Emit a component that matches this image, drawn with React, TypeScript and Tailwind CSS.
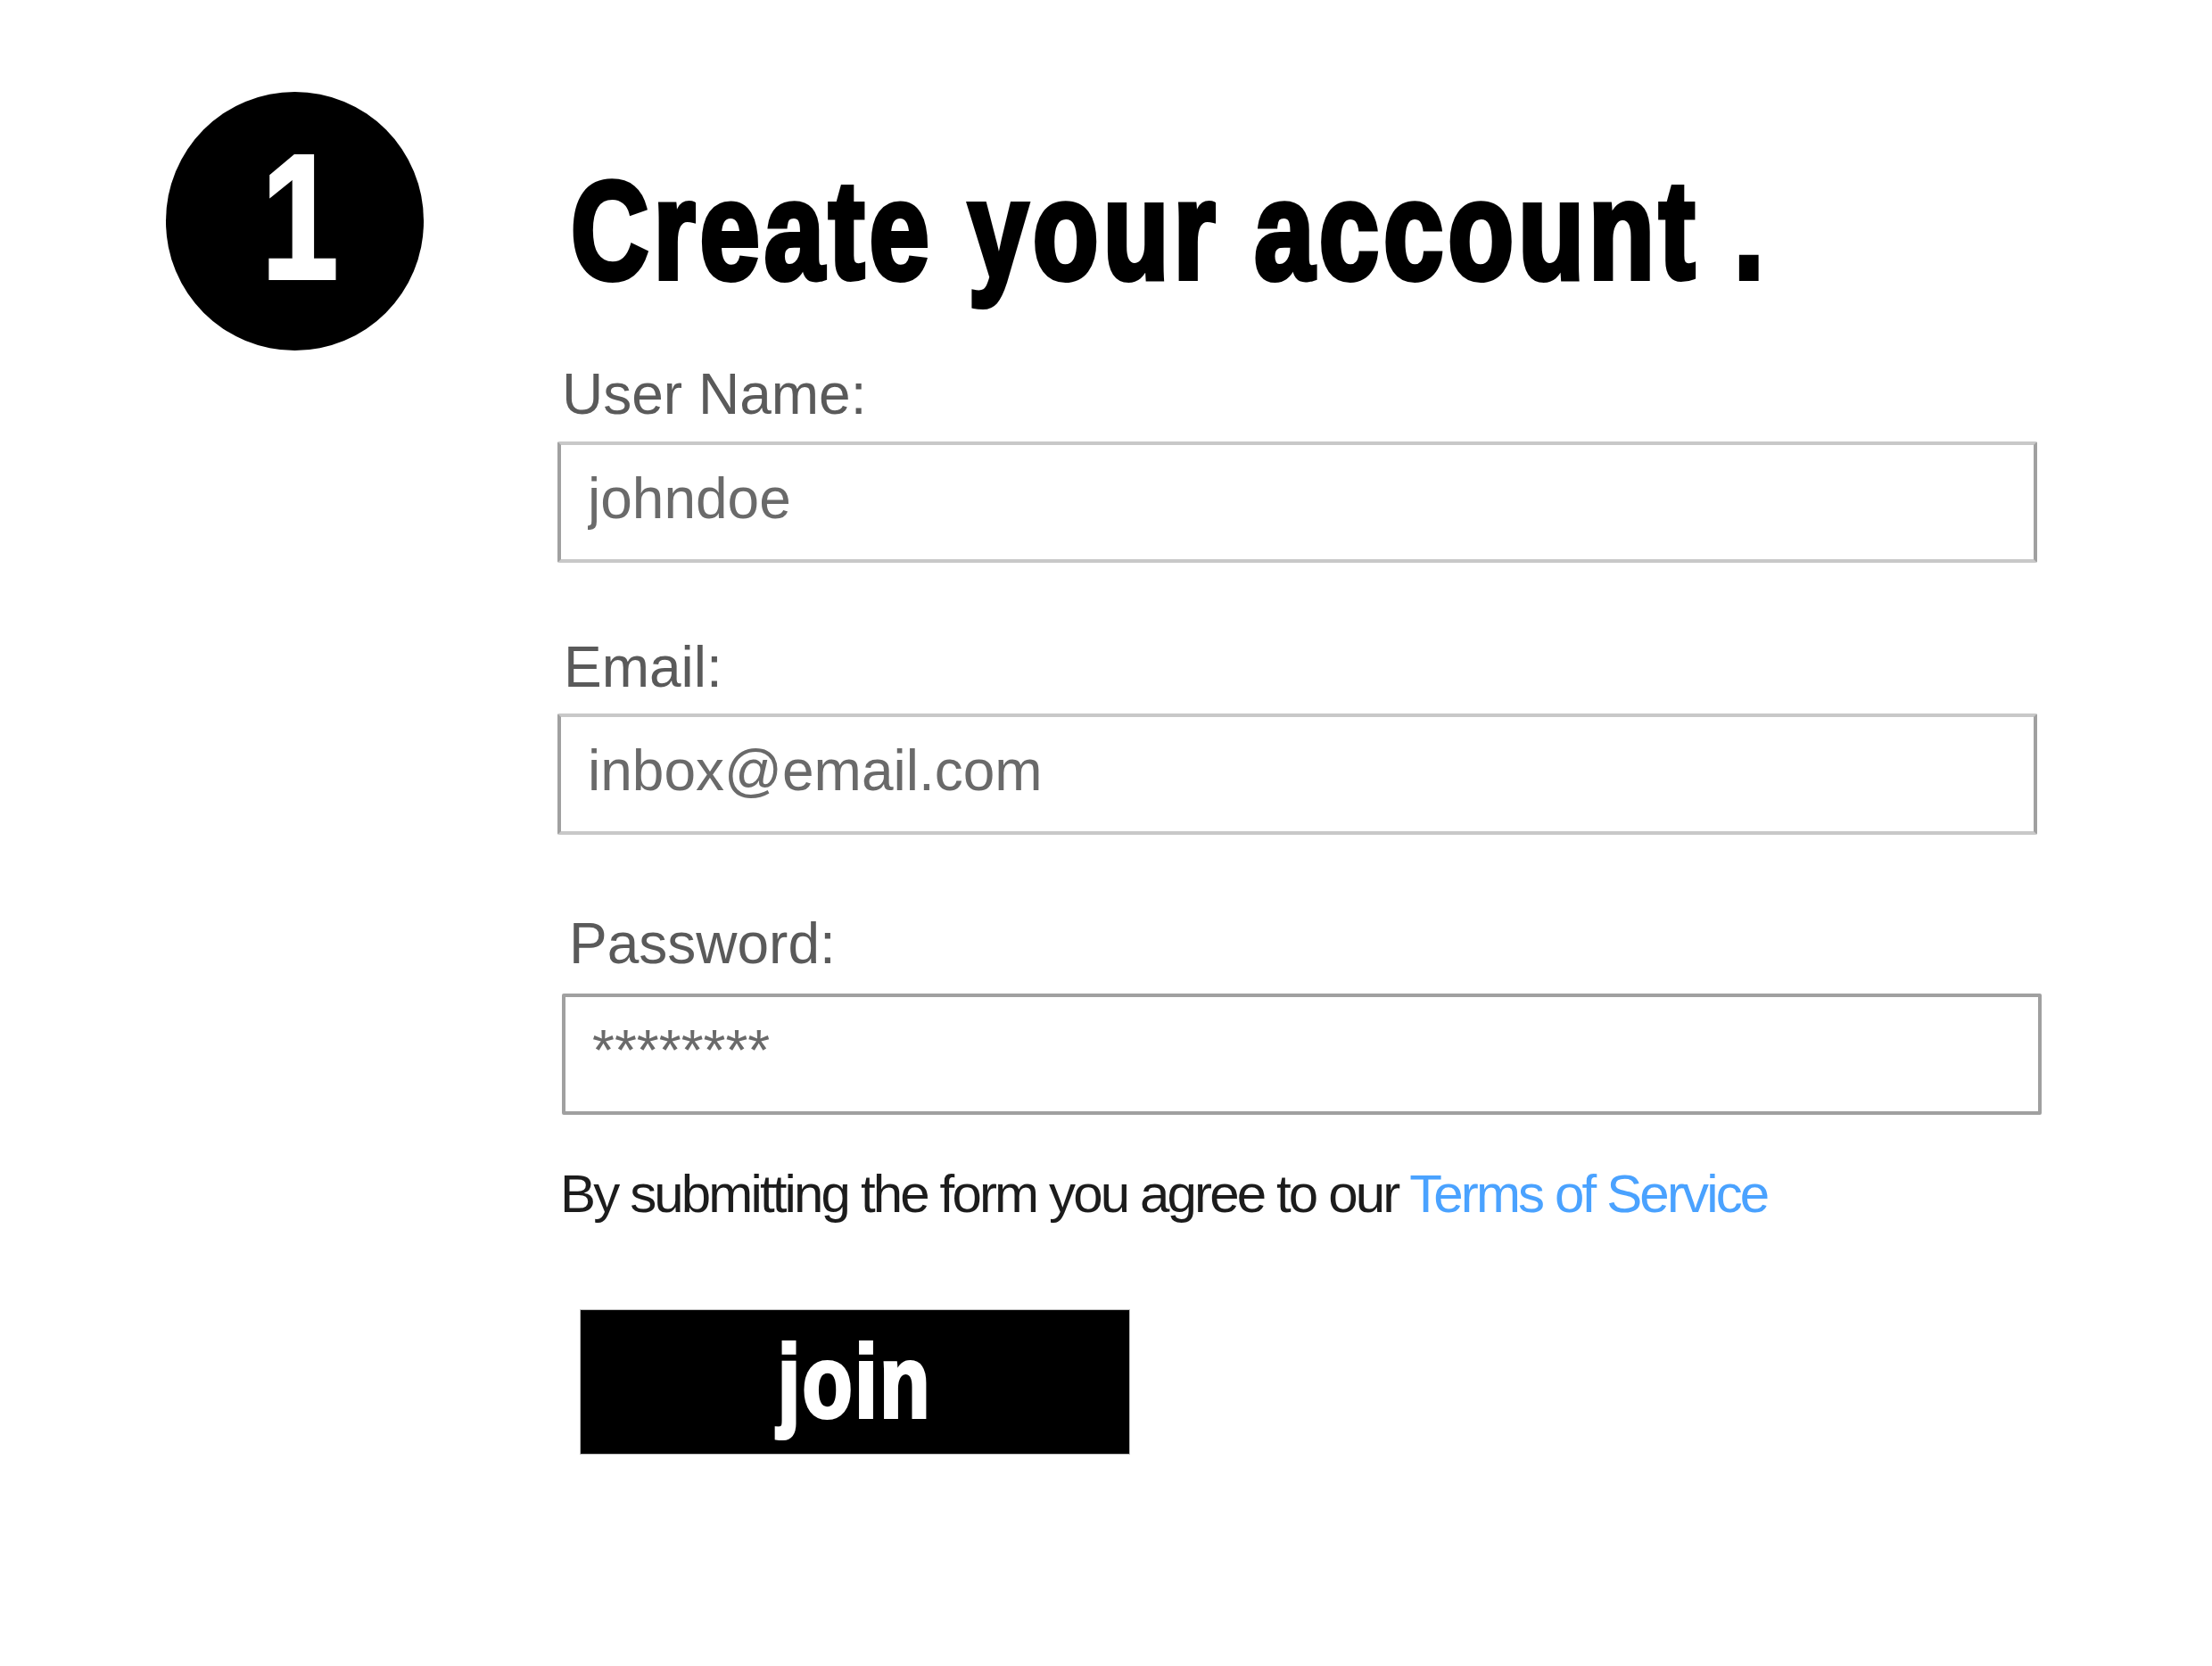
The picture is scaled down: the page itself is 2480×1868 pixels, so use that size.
const sans = "font-['Liberation_Sans',Arial,Helvetica,sans-serif]";

function Field({ label, value, labelClass, boxClass }: { label: string; value: string; labelClass: string; boxClass: string }) {
  return (
    <>
      <label className={`block text-[64px] leading-none text-[#5a5a5a] ${labelClass}`}>{label}</label>
      <input
        readOnly
        value={value}
        className={`block w-[1659px] h-[136px] pl-[30px] pb-[8px] text-[64px] text-[#6a6a6a] bg-white rounded-[2px] border-[4px] outline-none ${sans} ${boxClass}`}
      />
    </>
  );
}

export default function App() {
  return (
    <div className={`min-h-screen bg-white ${sans}`}>
      <div className="flex">
        <div className="ml-[186px] mt-[103px] w-[289px] h-[290px] rounded-full bg-black flex items-center justify-center shrink-0">
          <span className="pl-[16px] pb-[9px] text-[198px] leading-none font-bold text-white scale-x-[0.78] [-webkit-text-stroke:4px_#fff]">1</span>
        </div>

        <div className="ml-[150px] mt-[181px] flex flex-col">
          <h1 className="ml-[15px] text-[155px] leading-none font-bold text-black whitespace-nowrap tracking-[6.5px] origin-left scale-x-[0.78] [-webkit-text-stroke:6px_#000]">
            Create your account .
          </h1>

          <form className="flex flex-col">
            <Field
              label="User Name:"
              value="johndoe"
              labelClass="mt-[74px] ml-[5px]"
              boxClass="mt-[21px] border-x-[#a0a0a0] border-y-[#c8c8c8]"
            />
            <Field
              label="Email:"
              value="inbox@email.com"
              labelClass="mt-[85px] ml-[7px]"
              boxClass="mt-[20px] border-x-[#a0a0a0] border-y-[#c8c8c8]"
            />
            <Field
              label="Password:"
              value="********"
              labelClass="mt-[90px] ml-[13px]"
              boxClass="ml-[5px] mt-[24px] border-[#a0a0a0]"
            />

            <p className="mt-[59px] ml-[3px] text-[60px] leading-none tracking-[-2.85px] text-[#1c1c1c] whitespace-nowrap">
              By submitting the form you agree to our{" "}
              <a href="#" className="text-[#4aa2ff]">Terms of Service</a>
            </p>

            <button
              type="button"
              className="mt-[99px] ml-[25px] w-[617px] h-[163px] bg-black border border-[#bdbdbd] flex items-center justify-center"
            >
              <span className="text-[115px] leading-none font-bold text-white tracking-[3px] scale-x-[0.8] [-webkit-text-stroke:4px_#fff]">
                join
              </span>
            </button>
          </form>
        </div>
      </div>
    </div>
  );
}
